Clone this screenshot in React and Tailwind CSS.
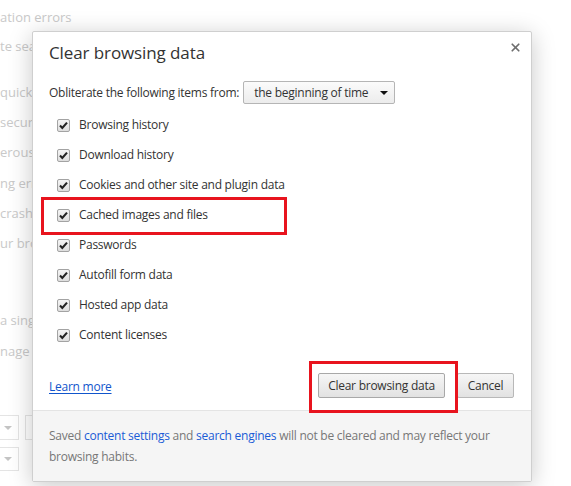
import { X } from 'lucide-react';

const items = [
    'Browsing history',
    'Download history',
    'Cookies and other site and plugin data',
    'Cached images and files',
    'Passwords',
    'Autofill form data',
    'Hosted app data',
    'Content licenses',
];

const CheckBox = () => (
    <span className="w-[13px] h-[13px] shrink-0 rounded-[2px] border border-[#a3a3a3] bg-gradient-to-b from-[#f4f4f4] to-[#dedede] flex items-center justify-center">
        <svg width="11" height="11" viewBox="0 0 11 11">
            <path d="M2 5.6 L4.3 8 L9 2.6" fill="none" stroke="#222" strokeWidth="2.1" />
        </svg>
    </span>
);

const Background = () => (
    <div className="absolute inset-0 overflow-hidden text-[13px] text-[#c9c9c9] whitespace-nowrap">
        <div className="h-[20px] leading-[20px] mt-[7px]">ation errors</div>
        <div className="h-[20px] leading-[20px] mt-[9px]">te search</div>
        <div className="h-[20px] leading-[20px] mt-[26px]">quickly</div>
        <div className="h-[20px] leading-[20px] mt-[10px]">security</div>
        <div className="h-[20px] leading-[20px] mt-[10px]">erous</div>
        <div className="h-[20px] leading-[20px] mt-[11px]">ng errors</div>
        <div className="h-[20px] leading-[20px] mt-[10px]">crash</div>
        <div className="h-[20px] leading-[20px] mt-[10px]">ur browser</div>
        <div className="h-[20px] leading-[20px] mt-[57px]">a single</div>
        <div className="h-[20px] leading-[20px] mt-[11px]">nage page</div>
        <div className="flex gap-[6px] mt-[54px] -ml-[20px]">
            <div className="w-[39px] h-[25px] border border-[#e4e4e4] flex items-center justify-end pr-[6px]">
                <span className="border-x-[4px] border-x-transparent border-t-[4px] border-t-[#c4c4c4]" />
            </div>
            <div className="w-[40px] h-[25px] border border-[#e4e4e4]" />
        </div>
        <div className="mt-[7px] -ml-[20px] w-[39px] h-[24px] border border-[#e4e4e4] flex items-center justify-end pr-[6px]">
            <span className="border-x-[4px] border-x-transparent border-t-[4px] border-t-[#c4c4c4]" />
        </div>
    </div>
);

const App = () => {
    return (
        <div className="relative w-[571px] h-[486px] bg-white overflow-hidden" style={{ fontFamily: '"Open Sans", "Noto Sans", sans-serif' }}>
            <Background />

            <div className="absolute left-[32px] top-[31px] w-[500px] h-[451px] bg-white rounded-[2px] border border-[#cfcfcf] shadow-[0_4px_23px_rgba(0,0,0,0.22)] flex flex-col text-[#333] text-[12px] tracking-[-0.25px]">
                <button className="absolute right-[9px] top-[9px] text-[#6e6e6e]">
                    <X size={13} strokeWidth={3.2} />
                </button>

                <div className="flex-1 pl-[16px] pr-[17px]">
                    <div className="text-[17px] leading-[20px] mt-[11px] tracking-[-0.1px] text-[#333]">Clear browsing data</div>

                    <div className="flex items-center gap-[4px] mt-[18px]">
                        <span>Obliterate the following items from:</span>
                        <div className="w-[152px] h-[23px] border border-[#b5b5b5] rounded-[2px] bg-gradient-to-b from-[#fbfbfb] to-[#ececec] flex items-center justify-between pl-[10px] pr-[6px]">
                            <span>the beginning of time</span>
                            <span className="border-x-[4px] border-x-transparent border-t-[4px] border-t-[#111]" />
                        </div>
                    </div>

                    <div className="mt-[6px] flex flex-col">
                        {items.map((label) => (
                            <label key={label} className="h-[30px] flex items-center gap-[9px] pl-[8px]">
                                <CheckBox />
                                <span>{label}</span>
                            </label>
                        ))}
                    </div>

                    <div className="flex items-center justify-between mt-[23px]">
                        <a className="text-[#1155cc] underline underline-offset-2 mt-[2px]">Learn more</a>
                        <div className="flex items-center gap-[12px]">
                            <button className="w-[127px] h-[25px] border border-[#a8a8a8] rounded-[2px] bg-gradient-to-b from-[#f6f6f6] to-[#e2e2e2] text-[#333]">Clear browsing data</button>
                            <button className="w-[57px] h-[25px] border border-[#b8b8b8] rounded-[2px] bg-gradient-to-b from-[#f6f6f6] to-[#e2e2e2] text-[#333]">Cancel</button>
                        </div>
                    </div>
                </div>

                <p className="h-[71px] shrink-0 bg-[#f5f5f5] border-t border-[#e4e4e4] pl-[16px] pr-[40px] pt-[14px] leading-[21px] text-[#777]">
                    Saved <a className="text-[#1a5bd6]">content settings</a> and <a className="text-[#1a5bd6]">search engines</a> will not be cleared and may reflect your browsing habits.
                </p>

                <div className="absolute left-[8px] top-[165px] w-[246px] h-[38px] border-[3px] border-[#e8141e]" />
                <div className="absolute left-[276px] top-[329px] w-[149px] h-[52px] border-[3px] border-[#e8141e]" />
            </div>
        </div>
    );
};

export default App;
